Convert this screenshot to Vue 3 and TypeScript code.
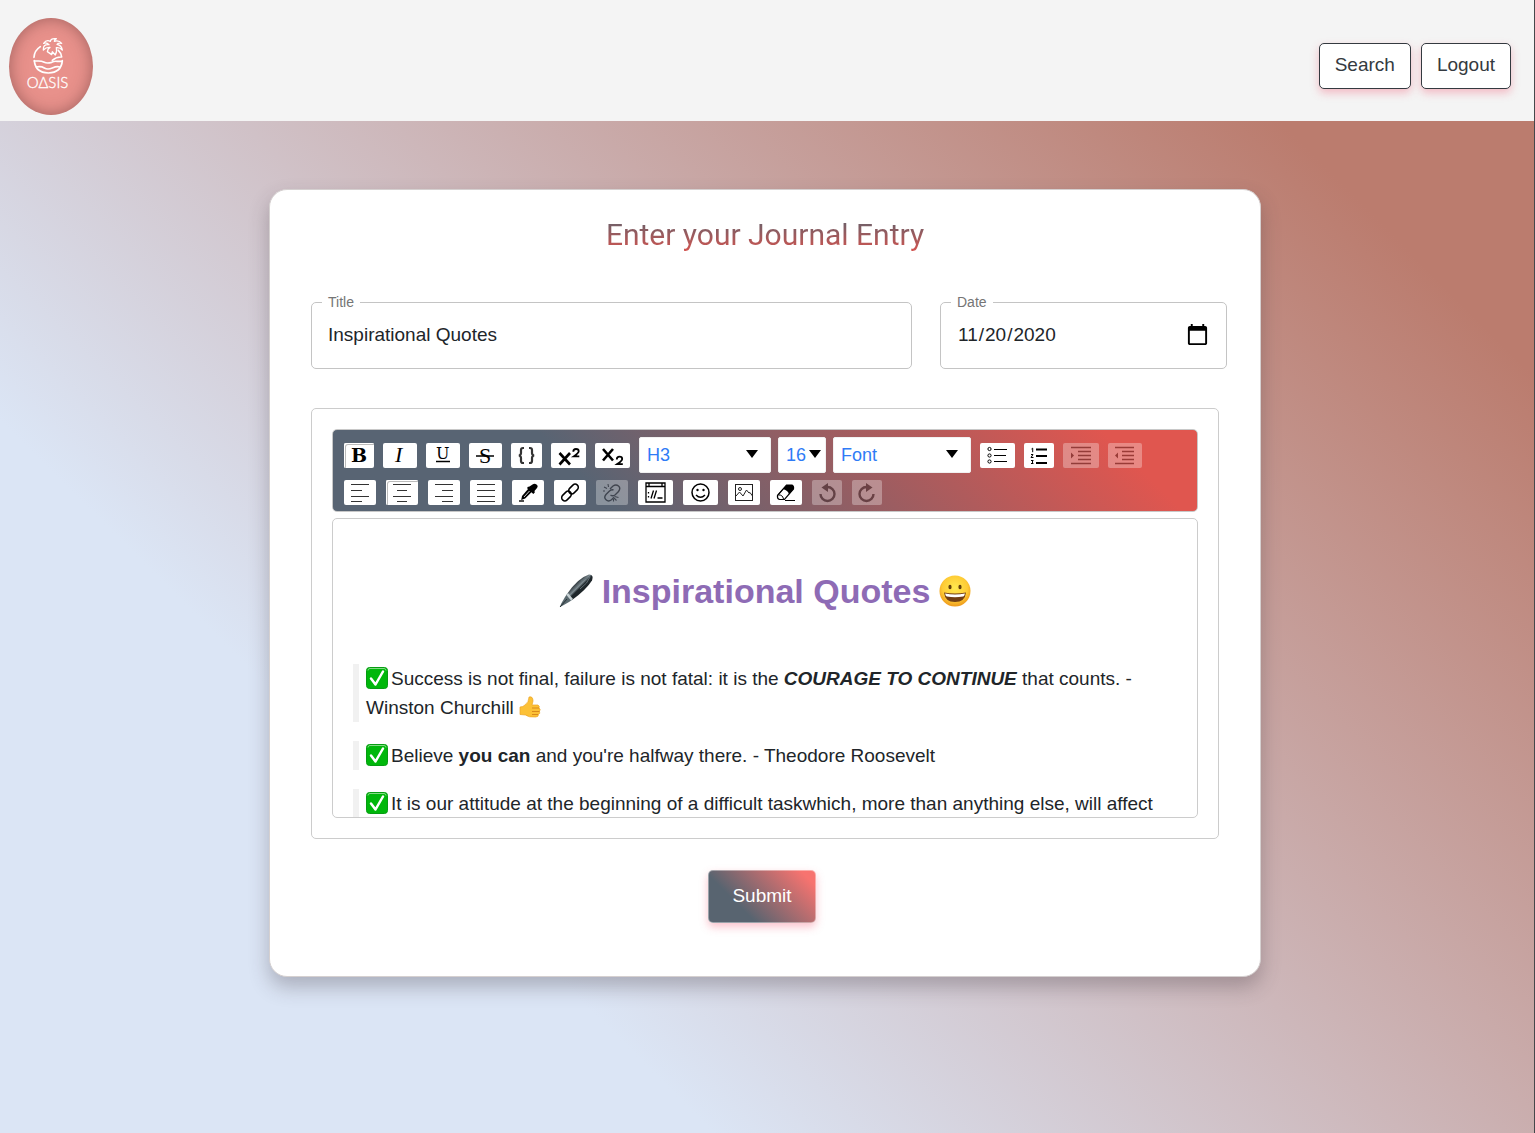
<script setup lang="ts">
import { ref } from 'vue'

interface Tool {
  label: string
  width: number
  icon: string
  state?: 'active' | 'disabled'
}

const title = ref('Inspirational Quotes')
const date = ref('2020-11-20')
const block = ref('H3')
const size = ref('16')
const font = ref('Font')

const inlineTools: Tool[] = [
  { label: 'Bold', width: 30, state: 'active', icon: '<text x="7" y="19" font-family="DejaVu Serif" font-weight="700" font-size="19">B</text>' },
  { label: 'Italic', width: 34, icon: '<text x="12" y="19" font-family="Liberation Serif" font-style="italic" font-size="22">I</text>' },
  { label: 'Underline', width: 34, icon: '<text x="10" y="16" font-family="DejaVu Serif" font-size="16">U</text><path d="M10 18.500h14" stroke="#000" stroke-width="1.500"/>' },
  { label: 'Strikethrough', width: 33, icon: '<text x="10" y="20" font-family="Liberation Serif" font-size="22">S</text><path d="M7 13h18" stroke="#000" stroke-width="1.500"/>' },
  { label: 'Monospace', width: 31, icon: '<g fill="none" stroke="#333" stroke-width="2.200"><path d="M13 5h-1q-2 0-2 2v3q0 2-2 2.500 2 .5 2 2.500v3q0 2 2 2h1M18 5h1q2 0 2 2v3q0 2 2 2.500-2 .5-2 2.500v3q0 2-2 2h-1"/></g>' },
  { label: 'Superscript', width: 35, icon: '<g fill="none" stroke="#000" stroke-width="2.600"><path d="M8.500 10l10.500 11.500M19 10L8.500 21.500"/><path d="M22.300 8.700q0-2.700 2.700-2.700 2.700 0 2.700 2.200 0 1.700-5 5.200h5.600" stroke-width="1.800"/></g>' },
  { label: 'Subscript', width: 35, icon: '<g fill="none" stroke="#000" stroke-width="2.600"><path d="M8 6l10 11.500M18 6L8 17.500"/><path d="M21.800 16.400q0-2.700 2.700-2.700 2.700 0 2.700 2.200 0 1.700-5 5.200h5.600" stroke-width="1.800"/></g>' },
]

const listTools: Tool[] = [
  { label: 'Unordered list', width: 35, icon: '<g fill="none" stroke="#000"><circle cx="9.500" cy="6" r="1.600"/><circle cx="9.500" cy="12.500" r="1.600"/><circle cx="9.500" cy="18.500" r="1.600"/><path d="M14 6.500h13M14 12.500h12M14 18.500h13" stroke-width="1.200"/></g>' },
  { label: 'Ordered list', width: 30, icon: '<path d="M12 6.500h11M12 13h11M12 20h11" stroke="#000" stroke-width="1.800"/><path d="M7.500 6l1.200-.8v4M7 11.500h2l-2 3h2.500M7 17.500h2.200l-1 1.500 1 1.500H7" fill="none" stroke="#000"/>' },
  { label: 'Indent', width: 36, state: 'disabled', icon: '<path d="M8 4.500h20M15 8.500h13M15 12.500h13M15 16.500h13M8 20.500h20" stroke="#000" stroke-width="1.500"/><path d="M8 9.500l3 3-3 3z"/>' },
  { label: 'Outdent', width: 34, state: 'disabled', icon: '<path d="M7 4.500h19M14 8.500h12M14 12.500h12M14 16.500h12M7 20.500h19" stroke="#000" stroke-width="1.500"/><path d="M10 9.500l-3 3 3 3z"/>' },
]

const secondRow: Tool[] = [
  { label: 'Align left', width: 32, icon: '<path d="M7 4.500h18M7 10.500h11M7 16.500h18M7 21.500h11" stroke="#333"/>' },
  { label: 'Align center', width: 32, state: 'active', icon: '<path d="M7 4.500h18M11 10.500h10M7 16.500h18M11 21.500h10" stroke="#333"/>' },
  { label: 'Align right', width: 32, icon: '<path d="M7 4.500h18M14 10.500h11M7 16.500h18M14 21.500h11" stroke="#333"/>' },
  { label: 'Justify', width: 32, icon: '<path d="M7 4.500h18M7 10.500h18M7 16.500h18M7 21.500h18" stroke="#333"/>' },
  { label: 'Text colour', width: 32, icon: '<path d="M15.500 7l2-.5 3-2q2-1.500 4 0t.5 3.500L22.500 11l.3 1.500-1.500 1.500-6-5.500z"/><path d="M16.500 8.500l-6.500 7.500-.8 4 4-1.500 7-7z"/><path d="M17.500 11l-5.500 6" stroke="#fff" stroke-width=".8"/><path d="M7 21h5" stroke="#000" stroke-width="1.400"/>' },
  { label: 'Link', width: 32, icon: '<g fill="none" stroke="#000" stroke-width="1.500"><rect x="-5.500" y="-3.200" width="11" height="6.400" rx="3.200" transform="translate(19.500 9) rotate(-45)"/><rect x="-5.500" y="-3.200" width="11" height="6.400" rx="3.200" transform="translate(12.500 16) rotate(-45)"/></g>' },
  { label: 'Unlink', width: 32, state: 'disabled', icon: '<g fill="none" stroke="#000" stroke-width="1.400"><path d="M14 9l3-3q3-2 5.500 0t0 5.500l-3.500 3.500q-2.500 1.500-4.500 0M17.500 10q-2-1-4 1l-3.500 3.500q-2.500 3 0 5.300t5.500 0l2.500-2.500"/><path d="M8 7l3 1.500M12 4l.5 3M9 11H7M18.500 16.500l4 1M18 18l2.500 2.500M17.500 19v2.500" stroke-width="1.100"/></g>' },
  { label: 'Embedded', width: 35, icon: '<path d="M8 3h19v19H8zM8 6.500h19M11 3v3M24 3v3" fill="none" stroke="#000" stroke-width="1.300"/><path d="M10.500 12v1.500M10.500 16v1.500M15.500 10.500l-2.500 8M18.500 10.500l-2.500 8M19.500 18h5" stroke="#000" stroke-width="1.300"/>' },
  { label: 'Emoji', width: 35, icon: '<g fill="none" stroke="#000" stroke-width="1.500"><circle cx="17.500" cy="12.500" r="8.500"/><path d="M13 15q4.500 4.500 9 0"/></g><circle cx="14.500" cy="10" r="1.200"/><circle cx="20.500" cy="10" r="1.200"/>' },
  { label: 'Image', width: 32, icon: '<g fill="none" stroke="#222"><rect x="7.500" y="4.500" width="17" height="16"/><circle cx="12" cy="9" r="1.500"/><path d="M8 16l3.500-4 3.500 4 3.500-6 2.500 3 1-.5 2.500 3.500"/></g>' },
  { label: 'Remove', width: 32, icon: '<path d="M7.500 15.500l9-10.500h5.500q2 1 1.500 4l-9 10.500H9.500q-2.500-1-2-4z" fill="#fff" stroke="#000" stroke-width="1.200"/><path d="M16.500 5h5.500q2 1 1.500 4l-4.500 5.500q-.5-4-6-5.500z"/><path d="M8.500 15q4-.5 5 4M7.500 15.500l6-7" fill="none" stroke="#000"/><path d="M15 20.500h10" stroke="#000"/>' },
  { label: 'Undo', width: 30, state: 'disabled', icon: '<path d="M8.500 14a7 7 0 1 0 7-7" fill="none" stroke="#000" stroke-width="2.400"/><path d="M16 3v9l-6.500-4.500z"/>' },
  { label: 'Redo', width: 30, state: 'disabled', icon: '<path d="M21.500 14a7 7 0 1 1-7-7" fill="none" stroke="#000" stroke-width="2.400"/><path d="M14 3v9l6.500-4.500z"/>' },
]
</script>

<template>
  <div class="page">
    <header class="topbar">
      <a class="logo" href="#" aria-label="Oasis home">
        <svg width="84" height="97" viewBox="0 0 252 291" aria-hidden="true">
          <g fill="none" stroke="#fff" stroke-width="5" stroke-linecap="round" stroke-linejoin="round">
            <path d="M94 86q-18 12-19 32" />
            <path d="M76 128q3 36 42 37 39-1 42-37" />
            <path d="M76 129h12q10 0 18 4t22 0q8-4 16-3h16M82 147q14-3 24 3t24 0 22-3" />
            <path d="M130 127q12-11 28-10-1-12-10-20" />
            <path stroke-width="4" d="M103 96Q101 78 120 80 112 72 104 76 112 64 124 70 126 60 142 62 136 66 136 70 150 66 158 76 148 74 144 79 158 82 160 96 152 87 142 89 145 98 139 111L130 101 128 110 115 101Q116 92 123 88 111 87 103 96Z" />
          </g>
          <text x="53" y="209" font-family="Lato, sans-serif" font-weight="300" font-size="45" fill="#fff" stroke="#fff">OΔSIS</text>
        </svg>
      </a>
      <nav class="actions">
        <button type="button" class="nav-button">Search</button>
        <button type="button" class="nav-button">Logout</button>
      </nav>
    </header>

    <main class="content">
      <form class="card" @submit.prevent>
        <h1 class="heading">Enter your Journal Entry</h1>

        <div class="fields">
          <fieldset class="field">
            <legend><label for="entry-title">Title</label></legend>
            <input id="entry-title" v-model="title" type="text" />
          </fieldset>
          <fieldset class="field">
            <legend><label for="entry-date">Date</label></legend>
            <input id="entry-date" v-model="date" type="date" />
          </fieldset>
        </div>

        <section class="editor">
          <div class="toolbar" role="toolbar" aria-label="Formatting">
            <div class="tool-row">
              <button v-for="t in inlineTools" :key="t.label" type="button" class="tool" :class="t.state" :aria-label="t.label" :disabled="t.state === 'disabled'">
                <svg :width="t.width" height="25" :viewBox="`0 0 ${t.width} 25`" v-html="t.icon"></svg>
              </button>
              <div class="selects">
                <span class="select block">
                  <select v-model="block" aria-label="Block type"><option>Normal</option><option>H3</option></select>
                </span>
                <span class="select size">
                  <select v-model="size" aria-label="Font size"><option>14</option><option>16</option></select>
                </span>
                <span class="select font">
                  <select v-model="font" aria-label="Font family"><option>Font</option><option>Arial</option></select>
                </span>
              </div>
              <button v-for="t in listTools" :key="t.label" type="button" class="tool" :class="t.state" :aria-label="t.label" :disabled="t.state === 'disabled'">
                <svg :width="t.width" height="25" :viewBox="`0 0 ${t.width} 25`" v-html="t.icon"></svg>
              </button>
            </div>
            <div class="tool-row second">
              <button v-for="t in secondRow" :key="t.label" type="button" class="tool" :class="t.state" :aria-label="t.label" :disabled="t.state === 'disabled'">
                <svg :width="t.width" height="25" :viewBox="`0 0 ${t.width} 25`" v-html="t.icon"></svg>
              </button>
            </div>
          </div>

          <div class="document">
            <h3 class="doc-title">
              <svg class="pen" width="34" height="34" viewBox="0 0 34 34" aria-hidden="true">
                <defs>
                  <linearGradient id="pen-body" x1="0" y1="0" x2="1" y2="1">
                    <stop offset="0.3" stop-color="#11181c" />
                    <stop offset="0.46" stop-color="#7d8a90" />
                    <stop offset="0.52" stop-color="#20282c" />
                    <stop offset="1" stop-color="#15191c" />
                  </linearGradient>
                </defs>
                <path d="M8 20Q19 4 30 0.500q5 0 3 6Q27 16 13 26z" fill="url(#pen-body)" />
                <path d="M8 20l5 6-3 2-7 4-2 1 1-3 4-7z" fill="#59686e" />
                <path d="M9 19l5 6-2 1.500-5-6z" fill="#c6d0d3" />
                <path d="M1 33l7-8" stroke="#273035" />
                <path d="M22 7q8-4 9-4-2 6-10 12" fill="none" stroke="#606d73" />
              </svg>
              <span>Inspirational Quotes</span>
              <svg class="face" width="32" height="32" viewBox="0 0 32 32" aria-hidden="true">
                <defs>
                  <radialGradient id="face-fill" cx="0.5" cy="0.4" r="0.62">
                    <stop offset="0" stop-color="#ffe94f" />
                    <stop offset="0.65" stop-color="#fecb35" />
                    <stop offset="1" stop-color="#ec9419" />
                  </radialGradient>
                </defs>
                <circle cx="16" cy="16" r="15.500" fill="url(#face-fill)" />
                <ellipse cx="11" cy="12" rx="1.600" ry="2.200" fill="#65400b" />
                <ellipse cx="21" cy="12" rx="1.600" ry="2.200" fill="#65400b" />
                <path d="M5 17.500q11 2 22 0-1 9.500-11 9.500T5 17.500z" fill="#713e14" />
                <path d="M6 18.500q10 2 20 0-.5 2.500-2 3-8 1.500-16 0Q6.500 21 6 18.500z" fill="#fff" />
              </svg>
            </h3>
            <blockquote>
              <svg class="check" width="22" height="22" viewBox="0 0 22 22" aria-hidden="true"><rect x=".5" y=".5" width="21" height="21" rx="3" fill="#00b70b" stroke="#079c13" /><path d="M2 3.500q0-2 2-2h14q2 0 2 2" fill="none" stroke="#83db85" /><path d="M5 11.500l4.500 6L17 4.500" fill="none" stroke="#fff" stroke-width="2.500" stroke-linecap="round" stroke-linejoin="round" /></svg>Success is not final, failure is not fatal: it is the <strong><em>COURAGE TO CONTINUE</em></strong> that counts. - Winston Churchill
              <svg class="thumb" width="22" height="22" viewBox="0 0 22 22" aria-hidden="true"><path d="M1 11q3 0 5-2 4-3 4-8 4-1 4 4l-1 4h6q2 1 1 3 2 1 .5 3.500 1 2-1 3 0 2.500-3 2.500-7 .5-10-2l-5.500-.5z" fill="#fcc136" stroke="#eca526" stroke-width=".7" /><path d="M13 12h7M13 15.500h7.500M13 18.500h6" stroke="#d98a1d" /></svg>
            </blockquote>
            <blockquote>
              <svg class="check" width="22" height="22" viewBox="0 0 22 22" aria-hidden="true"><rect x=".5" y=".5" width="21" height="21" rx="3" fill="#00b70b" stroke="#079c13" /><path d="M2 3.500q0-2 2-2h14q2 0 2 2" fill="none" stroke="#83db85" /><path d="M5 11.500l4.500 6L17 4.500" fill="none" stroke="#fff" stroke-width="2.500" stroke-linecap="round" stroke-linejoin="round" /></svg>Believe <strong>you can</strong> and you're halfway there. - Theodore Roosevelt
            </blockquote>
            <blockquote>
              <svg class="check" width="22" height="22" viewBox="0 0 22 22" aria-hidden="true"><rect x=".5" y=".5" width="21" height="21" rx="3" fill="#00b70b" stroke="#079c13" /><path d="M2 3.500q0-2 2-2h14q2 0 2 2" fill="none" stroke="#83db85" /><path d="M5 11.500l4.500 6L17 4.500" fill="none" stroke="#fff" stroke-width="2.500" stroke-linecap="round" stroke-linejoin="round" /></svg>It is our attitude at the beginning of a difficult taskwhich, more than anything else, will affect
            </blockquote>
          </div>
        </section>

        <div class="submit-row">
          <button type="submit" class="submit">Submit</button>
        </div>
      </form>
    </main>
  </div>
</template>

<style>
body {
  background: #f4f4f4;
}
</style>

<style scoped>
.page {
  min-height: 100vh;
  display: flex;
  flex-direction: column;
  box-sizing: border-box;
  border-right: 1px solid #45484b;
  font-family: "Liberation Sans", Arial, sans-serif;
  font-size: 19px;
  color: #212529;
}
.page *,
.page *::after {
  box-sizing: border-box;
}
button,
input,
select {
  font: inherit;
  color: inherit;
  margin: 0;
}
.topbar {
  display: flex;
  align-items: center;
  justify-content: space-between;
  padding: 18px 23px 6px 9px;
  background: #f4f4f4;
}
.logo {
  display: block;
  height: 97px;
  border-radius: 50%;
  background: #e8918b;
  box-shadow: inset 0 0 16px rgba(90, 50, 50, 0.5);
}
.logo svg {
  display: block;
}
.actions {
  display: flex;
  gap: 10px;
  padding-bottom: 2px;
}
.nav-button {
  height: 46px;
  padding: 0 15px 2px;
  border: 1px solid #343a40;
  border-radius: 5px;
  background: #fff;
  color: #343a40;
  box-shadow: 0 4px 8px rgba(240, 80, 110, 0.35);
}
.content {
  flex: 1;
  padding: 68px 4px 68px 0;
  background: linear-gradient(45deg, #dbe5f5 28%, #bb7c6e 90%);
}
.card {
  max-width: 992px;
  margin: 0 auto;
  padding: 20px 33px 53px 41px;
  border: 1px solid #d5d0d0;
  border-radius: 18px;
  background: #fff;
  box-shadow: 0 10px 20px rgba(60, 50, 60, 0.3);
}
.heading {
  width: fit-content;
  margin: 0 auto 34px;
  padding-right: 8px;
  font-family: Roboto, "Liberation Sans", sans-serif;
  font-size: 30px;
  font-weight: 400;
  line-height: 50px;
  background: linear-gradient(#56636f 10%, #e0524c 90%);
  background-clip: text;
  -webkit-background-clip: text;
  color: transparent;
}
.fields {
  display: grid;
  grid-template-columns: 601fr 287fr;
  gap: 28px;
}
.field {
  min-width: 0;
  height: 75px;
  margin: 0;
  padding: 0 16px;
  border: 1px solid #c4c4c4;
  border-radius: 5px;
}
.field legend {
  margin-left: -6px;
  padding: 0 6px;
  font-size: 14px;
  line-height: 16px;
  color: #757575;
}
.field input {
  display: block;
  width: 100%;
  height: 50px;
  padding: 0;
  border: 0;
  outline: 0;
  background: transparent;
}
.field input::-webkit-calendar-picker-indicator {
  width: 25px;
  height: 25px;
  padding: 0;
}
.editor {
  margin: 39px 8px 0 0;
  padding: 20px;
  border: 1px solid #ccc;
  border-radius: 5px;
}
.toolbar {
  padding: 7px 11px 6px;
  border: 1px solid #c8c8c8;
  border-radius: 5px;
  background: linear-gradient(45deg, #586473 30%, #e0564f 90%);
}
.tool-row {
  display: flex;
  flex-wrap: wrap;
  align-items: center;
  gap: 9px;
}
.tool-row.second {
  gap: 10px;
  margin-top: 7px;
}
.tool {
  height: 25px;
  padding: 0;
  border: 0;
  border-radius: 2px;
  background: #fff;
}
.tool svg {
  display: block;
}
.tool.active {
  box-shadow: inset 2px 2px 0 -1px #fff, inset 2px 2px 0 0 #bbb;
}
.tool.disabled {
  opacity: 0.3;
}
.selects {
  display: flex;
  gap: 7px;
}
.select {
  position: relative;
}
.select::after {
  content: "";
  position: absolute;
  top: 13px;
  right: 13px;
  border: 6px solid transparent;
  border-top: 8px solid #000;
  border-bottom: 0;
  pointer-events: none;
}
.select.size::after {
  right: 5px;
}
.select select {
  display: block;
  width: 100%;
  height: 36px;
  padding: 0 7px;
  appearance: none;
  border: 1px solid #f1f1f1;
  border-radius: 2px;
  background: #fff;
  color: #2f7bf6;
  font-size: 18px;
}
.select.block {
  width: 132px;
}
.select.size {
  width: 48px;
}
.select.font {
  width: 138px;
}
.document {
  height: 300px;
  margin-top: 6px;
  padding: 0 20px;
  overflow: hidden;
  border: 1px solid #ccc;
  border-radius: 5px;
}
.doc-title {
  display: flex;
  align-items: center;
  justify-content: center;
  gap: 9px;
  margin: 48px 0 49px;
  font-size: 34px;
  line-height: 48px;
  color: #8e6bb5;
}
blockquote {
  margin: 0 0 19px;
  padding-left: 7px;
  border-left: 6px solid #f1f1f1;
  line-height: 29px;
}
.check {
  margin-right: 3px;
}
.check,
.thumb {
  vertical-align: -4px;
}
.submit-row {
  display: flex;
  justify-content: center;
  padding: 31px 14px 0 0;
}
.submit {
  height: 53px;
  padding: 0 23px 2px;
  border: 1px solid rgba(255, 255, 255, 0.4);
  border-radius: 5px;
  background: linear-gradient(45deg, #586470 30%, #f7736f 90%) border-box;
  color: #fff;
  box-shadow: 0 4px 8px rgba(240, 80, 110, 0.35);
}
</style>
